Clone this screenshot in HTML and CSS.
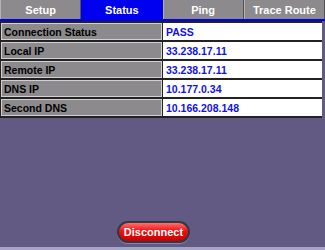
FILE: index.html
```html
<!DOCTYPE html>
<html>
<head>
    <link rel="stylesheet" href="styles.css">
</head>
<body>
    <div class="screen">
        <div class="tabs">
            <div class="tab">Setup</div>
            <div class="tab active">Status</div>
            <div class="tab">Ping</div>
            <div class="tab">Trace Route</div>
        </div>

        <div class="status-table">
            <div class="label">Connection Status</div>
            <div class="value">PASS</div>
            <div class="label">Local IP</div>
            <div class="value">33.238.17.11</div>
            <div class="label">Remote IP</div>
            <div class="value">33.238.17.11</div>
            <div class="label">DNS IP</div>
            <div class="value">10.177.0.34</div>
            <div class="label">Second DNS</div>
            <div class="value">10.166.208.148</div>
        </div>

        <div class="spacer"></div>

        <div class="actions">
            <button class="red-button">Disconnect</button>
        </div>
    </div>
</body>
</html>
```

FILE: styles.css
```css
body {
    margin: 0;
    background-color: #625a82;
    font-family: "Liberation Sans", Arial, sans-serif;
    font-weight: bold;
    font-size: 10.5px;
}

.screen {
    width: 325px;
    height: 250px;
    display: flex;
    flex-direction: column;
    border-bottom: 3px solid #a8a4c8;
    box-sizing: border-box;
}

.tabs {
    display: flex;
    height: 19px;
    border-bottom: 2px solid #0000f0;
}

.tab {
    flex: 1;
    display: flex;
    align-items: center;
    justify-content: center;
    background-color: #8c8a8c;
    color: #ffffff;
    border-left: 1px solid #b4b2b4;
    border-right: 1px solid #555355;
    font-size: 11px;
}

.tab.active {
    background-color: #0000f0;
    border-color: #0000f0;
}

.status-table {
    display: grid;
    grid-template-columns: 161px 159px;
    grid-auto-rows: 17px;
    row-gap: 2px;
    column-gap: 1px;
    padding: 2px 1px 2px 1px;
    background-color: #222222;
    width: 322px;
    box-sizing: border-box;
}

.label, .value {
    display: flex;
    align-items: center;
    padding-left: 2px;
    border: 1px solid #d0d0d0;
    box-sizing: border-box;
}

.label {
    background-color: #8c8a8c;
    color: #000000;
}

.value {
    background-color: #ffffff;
    color: #1010e8;
    border-color: #ffffff;
}

.spacer {
    flex: 1;
}

.actions {
    display: flex;
    justify-content: center;
    padding: 0 18px 4px 0;
}

.red-button {
    width: 73px;
    height: 22px;
    box-sizing: border-box;
    border-radius: 11px;
    border: 2px solid #2e3a48;
    background: linear-gradient(#ff7070, #f01010 45%, #c80000);
    color: #ffffff;
    font-family: "Liberation Sans", Arial, sans-serif;
    font-weight: bold;
    font-size: 11px;
    padding: 0;
    box-shadow: 0 1px 0 #8a84a8;
}
```
